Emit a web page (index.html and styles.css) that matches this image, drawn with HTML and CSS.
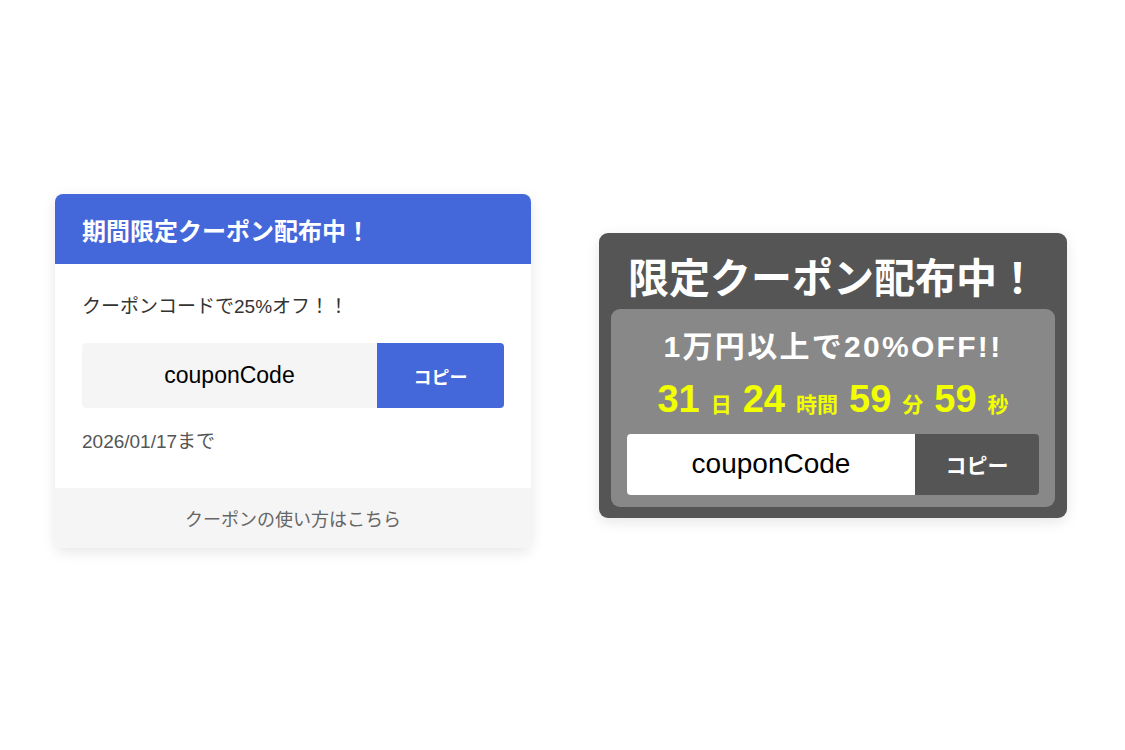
FILE: index.html
```html
<!DOCTYPE html>
<html lang="ja">
<head>
    <meta charset="UTF-8">
    <meta name="viewport" content="width=device-width, initial-scale=1.0">
    <title>Coupon</title>
    <link rel="stylesheet" href="styles.css">
</head>
<body>

    <div class="page">

        <div class="coupon-card">
            <div class="coupon-card-head">期間限定クーポン配布中！</div>
            <div class="coupon-card-body">
                <p class="coupon-lead">クーポンコードで25%オフ！！</p>
                <div class="code-row">
                    <div class="code-box">couponCode</div>
                    <button class="code-copy">コピー</button>
                </div>
                <p class="coupon-limit">2026/01/17まで</p>
            </div>
            <div class="coupon-card-foot">クーポンの使い方はこちら</div>
        </div>

        <div class="timer-card">
            <div class="timer-title">限定クーポン配布中！</div>
            <div class="timer-inner">
                <div class="timer-offer">1万円以上で20%OFF!!</div>
                <div class="timer-count">
                    <span class="num">31</span><span class="unit">日</span>
                    <span class="num">24</span><span class="unit">時間</span>
                    <span class="num">59</span><span class="unit">分</span>
                    <span class="num">59</span><span class="unit">秒</span>
                </div>
                <div class="timer-code-row">
                    <div class="timer-code">couponCode</div>
                    <button class="timer-copy">コピー</button>
                </div>
            </div>
        </div>

    </div>

</body>
</html>
```

FILE: styles.css
```css
body {
    margin: 0;
    background: #fff;
    font-family: "Liberation Sans", "Noto Sans CJK JP", sans-serif;
    color: #333;
}
.page {
    height: 750px;
    padding-right: 3px;
    display: flex;
    align-items: center;
    justify-content: center;
    gap: 68px;
}

/* left card */
.coupon-card {
    width: 476px;
    margin-bottom: 8px;
    border-radius: 8px;
    overflow: hidden;
    background: #fff;
    box-shadow: 0 4px 14px rgba(0, 0, 0, 0.1);
}
.coupon-card-head {
    height: 70px;
    display: flex;
    align-items: center;
    padding: 0 27px;
    background: #4467da;
    color: #fff;
    font-size: 24px;
    font-weight: bold;
}
.coupon-card-body {
    padding: 30px 27px 35px;
}
.coupon-lead {
    margin: 0;
    font-size: 19px;
    line-height: 26px;
}
.code-row {
    display: flex;
    height: 65px;
    margin-top: 23px;
}
.code-box {
    flex: 1;
    display: flex;
    align-items: center;
    justify-content: center;
    background: #f5f5f5;
    border-radius: 4px 0 0 4px;
    color: #000;
    font-size: 23px;
}
.code-copy {
    width: 127px;
    border: none;
    border-radius: 0 4px 4px 0;
    background: #4467da;
    color: #fff;
    font-family: inherit;
    font-size: 18px;
    font-weight: bold;
}
.coupon-limit {
    margin: 23px 0 0;
    font-size: 19px;
    line-height: 22px;
    color: #555;
}
.coupon-card-foot {
    height: 60px;
    display: flex;
    align-items: center;
    justify-content: center;
    background: #f5f5f5;
    color: #666;
    font-size: 18px;
}

/* right card */
.timer-card {
    width: 444px;
    padding: 12px 12px 11px;
    border-radius: 9px;
    background: #555;
    box-shadow: 0 4px 14px rgba(0, 0, 0, 0.1);
}
.timer-title {
    height: 60px;
    margin-bottom: 4px;
    display: flex;
    align-items: center;
    justify-content: center;
    color: #fff;
    font-size: 41px;
    font-weight: bold;
}
.timer-inner {
    padding: 20px 16px 12px;
    border-radius: 9px;
    background: #888;
}
.timer-offer {
    text-align: center;
    color: #fff;
    font-size: 30px;
    font-weight: bold;
    line-height: 36px;
    letter-spacing: 2.3px;
}
.timer-count {
    margin-top: 14px;
    height: 40px;
    display: flex;
    align-items: baseline;
    justify-content: center;
    color: #f2ff00;
    font-weight: bold;
}
.timer-count .num {
    font-size: 38px;
    line-height: 40px;
}
.timer-count .unit {
    margin: 0 11px;
    font-size: 21px;
}
.timer-count .unit:last-child {
    margin-right: 0;
}
.timer-code-row {
    display: flex;
    height: 61px;
    margin-top: 15px;
}
.timer-code {
    flex: 1;
    display: flex;
    align-items: center;
    justify-content: center;
    background: #fff;
    border-radius: 4px 0 0 4px;
    color: #000;
    font-size: 28px;
}
.timer-copy {
    width: 124px;
    border: none;
    border-radius: 0 4px 4px 0;
    background: #555;
    color: #fff;
    font-family: inherit;
    font-size: 21px;
    font-weight: bold;
}
```
